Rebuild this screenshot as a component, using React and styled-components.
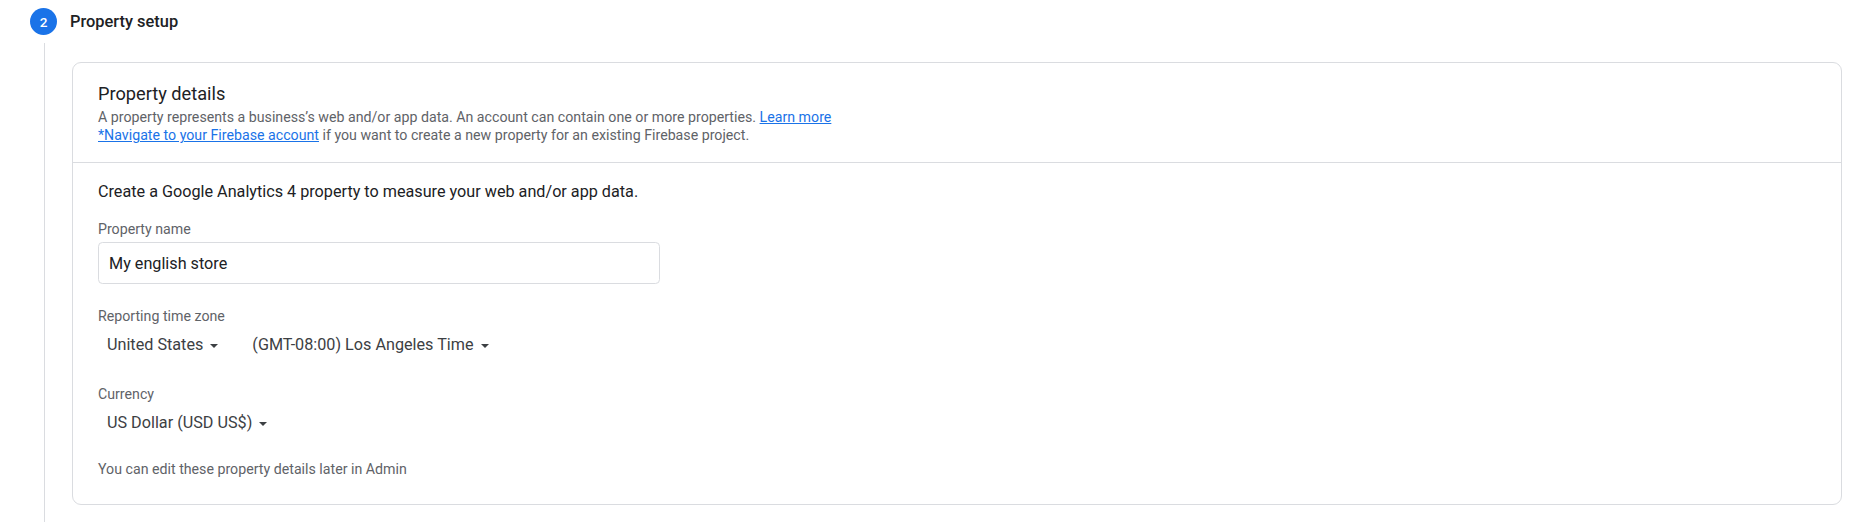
import styled, { createGlobalStyle } from "styled-components";

/** global */
const GlobalStyle = createGlobalStyle`
  html, body {
    margin: 0;
    padding: 0;
    background: #ffffff;
  }
  body {
    font-family: Roboto, "Liberation Sans", Arial, sans-serif;
    color: #202124;
    -webkit-font-smoothing: antialiased;
  }
`;

const colors = {
  blue: "#1a73e8",
  text: "#202124",
  select: "#3c4043",
  muted: "#5f6368",
  border: "#dadce0",
};

/** step */
const Step = styled.section`
  display: flex;
  flex-direction: column;
  min-height: 522px;
`;

const StepHeader = styled.div`
  display: flex;
  align-items: center;
  gap: 13px;
  padding: 8px 0 0 30px;
`;

const StepNumber = styled.span`
  width: 27px;
  height: 27px;
  border-radius: 50%;
  background: ${colors.blue};
  color: #ffffff;
  font-size: 13.6px;
  font-weight: 500;
  display: flex;
  align-items: center;
  justify-content: center;
`;

const StepTitle = styled.h2`
  margin: 0;
  font-size: 16.4px;
  line-height: 26px;
  font-weight: 500;
  color: ${colors.text};
`;

const StepBody = styled.div`
  flex: 1;
  display: flex;
  margin-top: 8px;
  padding-left: 44px;
`;

const Rail = styled.div`
  width: 1px;
  flex-shrink: 0;
  background: ${colors.border};
`;

const StepContent = styled.div`
  flex: 1;
  margin: 0 32px 0 27px;
  padding: 19px 0 17px;
`;

/** card */
const Card = styled.div`
  border: 1px solid ${colors.border};
  border-radius: 9px;
`;

const CardHeader = styled.div`
  padding: 18px 25px 18px;
  border-bottom: 1px solid ${colors.border};
`;

const CardTitle = styled.h3`
  margin: 0;
  font-size: 18.2px;
  line-height: 26px;
  font-weight: 400;
  color: ${colors.text};
`;

const CardDesc = styled.p`
  margin: 1px 0 0;
  font-size: 14.2px;
  line-height: 18px;
  color: ${colors.muted};
`;

const Link = styled.a`
  color: ${colors.blue};
  text-decoration: underline;
  cursor: pointer;
`;

const CardBody = styled.div`
  display: flex;
  flex-direction: column;
  padding: 18px 25px 26px;
`;

const Intro = styled.p`
  margin: 0;
  font-size: 16.2px;
  line-height: 22px;
  color: ${colors.text};
`;

const Field = styled.div`
  display: flex;
  flex-direction: column;
  margin-top: ${({ $top }) => $top}px;
`;

const Label = styled.label`
  font-size: 14.2px;
  line-height: 18px;
  color: ${colors.muted};
`;

const TextInput = styled.input`
  box-sizing: border-box;
  width: 562px;
  height: 42px;
  margin-top: 4px;
  padding: 0 10px;
  border: 1px solid ${colors.border};
  border-radius: 4.4px;
  font-family: inherit;
  font-size: 16.2px;
  color: ${colors.text};
  background: #ffffff;
  outline: none;
`;

const SelectRow = styled.div`
  display: flex;
  align-items: center;
  gap: 16px;
  margin-top: 9px;
`;

const Select = styled.button`
  display: flex;
  align-items: center;
  gap: 7px;
  padding: 0 9px;
  border: none;
  background: transparent;
  font-family: inherit;
  font-size: 16.2px;
  line-height: 22px;
  color: ${colors.select};
  cursor: pointer;
`;

const Arrow = styled.span`
  width: 0;
  height: 0;
  border-left: 4.5px solid transparent;
  border-right: 4.5px solid transparent;
  border-top: 4.5px solid ${colors.select};
  margin-top: 1px;
`;

const Note = styled.p`
  margin: 26px 0 0;
  font-size: 14.2px;
  line-height: 18px;
  color: ${colors.muted};
`;

const Dropdown = ({ children }) => (
  <Select type="button">
    {children}
    <Arrow />
  </Select>
);

/** render element */
export default function App() {
  return (
    <>
      <GlobalStyle />
      <Step>
        <StepHeader>
          <StepNumber>2</StepNumber>
          <StepTitle>Property setup</StepTitle>
        </StepHeader>

        <StepBody>
          <Rail />
          <StepContent>
            <Card>
              <CardHeader>
                <CardTitle>Property details</CardTitle>
                <CardDesc>
                  A property represents a business’s web and/or app data. An
                  account can contain one or more properties.{" "}
                  <Link>Learn more</Link>
                  <br />
                  <Link>*Navigate to your Firebase account</Link> if you want
                  to create a new property for an existing Firebase project.
                </CardDesc>
              </CardHeader>

              <CardBody>
                <Intro>
                  Create a Google Analytics 4 property to measure your web
                  and/or app data.
                </Intro>

                <Field $top={17}>
                  <Label htmlFor="property-name">Property name</Label>
                  <TextInput
                    id="property-name"
                    defaultValue="My english store"
                  />
                </Field>

                <Field $top={23}>
                  <Label>Reporting time zone</Label>
                  <SelectRow>
                    <Dropdown>United States</Dropdown>
                    <Dropdown>(GMT-08:00) Los Angeles Time</Dropdown>
                  </SelectRow>
                </Field>

                <Field $top={29}>
                  <Label>Currency</Label>
                  <SelectRow>
                    <Dropdown>US Dollar (USD US$)</Dropdown>
                  </SelectRow>
                </Field>

                <Note>You can edit these property details later in Admin</Note>
              </CardBody>
            </Card>
          </StepContent>
        </StepBody>
      </Step>
    </>
  );
}
